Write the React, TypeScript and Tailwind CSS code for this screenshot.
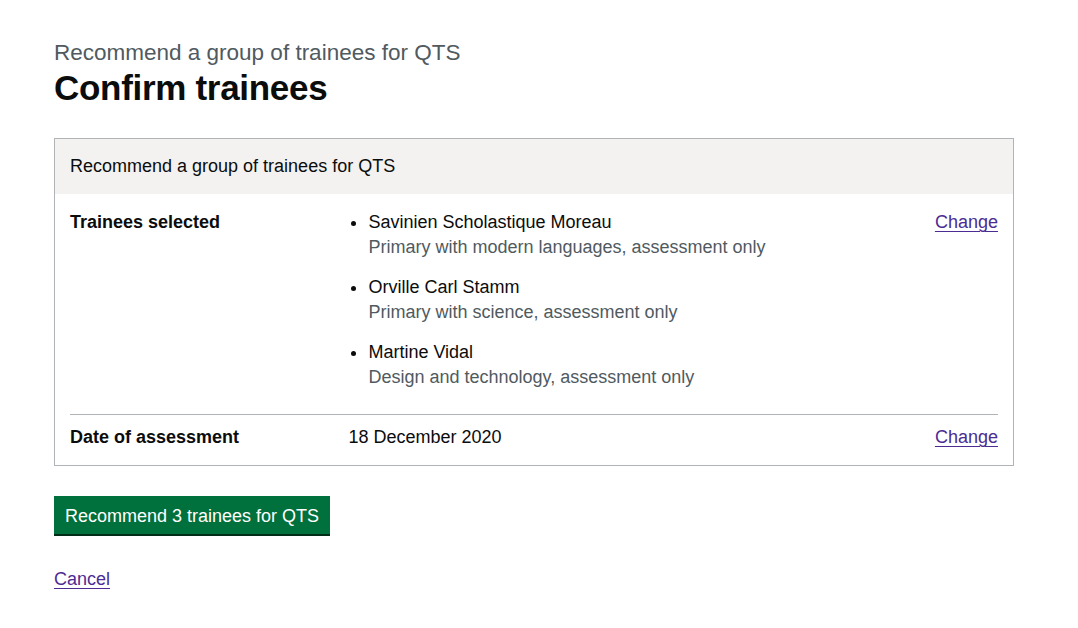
import React from "react";

const trainees = [
  { name: "Savinien Scholastique Moreau", course: "Primary with modern languages, assessment only" },
  { name: "Orville Carl Stamm", course: "Primary with science, assessment only" },
  { name: "Martine Vidal", course: "Design and technology, assessment only" },
];

const ChangeLink = () => (
  <a href="#" className="text-[#4c2c92] underline underline-offset-[3px] decoration-1">
    Change
  </a>
);

export default function App() {
  return (
    <div className="min-h-screen bg-white text-[#0b0c0c] font-['Liberation_Sans',Arial,sans-serif]">
      <main className="px-[54px] pt-[38px] w-[1014px] box-content">
        <span className="block text-[22.5px] leading-[30px] text-[#505a5f]">
          Recommend a group of trainees for QTS
        </span>
        <h1 className="text-[35px] leading-[40px] font-bold tracking-[-0.3px] mb-[30px]">
          Confirm trainees
        </h1>

        <div className="border border-[#b1b4b6] w-[960px]">
          <div className="bg-[#f3f2f1] px-[15px] pt-[15px] pb-[16px] text-[18px] leading-[24px]">
            Recommend a group of trainees for QTS
          </div>
          <dl className="px-[15px] pt-[16px] pb-[15px] text-[18px] leading-[25px]">
            <div className="flex border-b border-[#b1b4b6] pb-[24px]">
              <dt className="w-[30%] font-bold pr-5">Trainees selected</dt>
              <dd className="w-[50%]">
                <ul className="list-disc pl-[20px] flex flex-col gap-[15px]">
                  {trainees.map((t) => (
                    <li key={t.name}>
                      {t.name}
                      <br />
                      <span className="text-[#505a5f]">{t.course}</span>
                    </li>
                  ))}
                </ul>
              </dd>
              <dd className="w-[20%] text-right">
                <ChangeLink />
              </dd>
            </div>
            <div className="flex pt-[10px]">
              <dt className="w-[30%] font-bold pr-5">Date of assessment</dt>
              <dd className="w-[50%]">18 December 2020</dd>
              <dd className="w-[20%] text-right">
                <ChangeLink />
              </dd>
            </div>
          </dl>
        </div>

        <button className="mt-[30px] bg-[#00703c] text-white text-[18px] leading-[24px] px-[11px] pt-[8px] pb-[6px] shadow-[0_2px_0_#002d18]">
          Recommend 3 trainees for QTS
        </button>

        <div className="mt-[33px] text-[18px] leading-[25px]">
          <a href="#" className="text-[#4c2c92] underline underline-offset-[3px] decoration-1">
            Cancel
          </a>
        </div>
      </main>
    </div>
  );
}
